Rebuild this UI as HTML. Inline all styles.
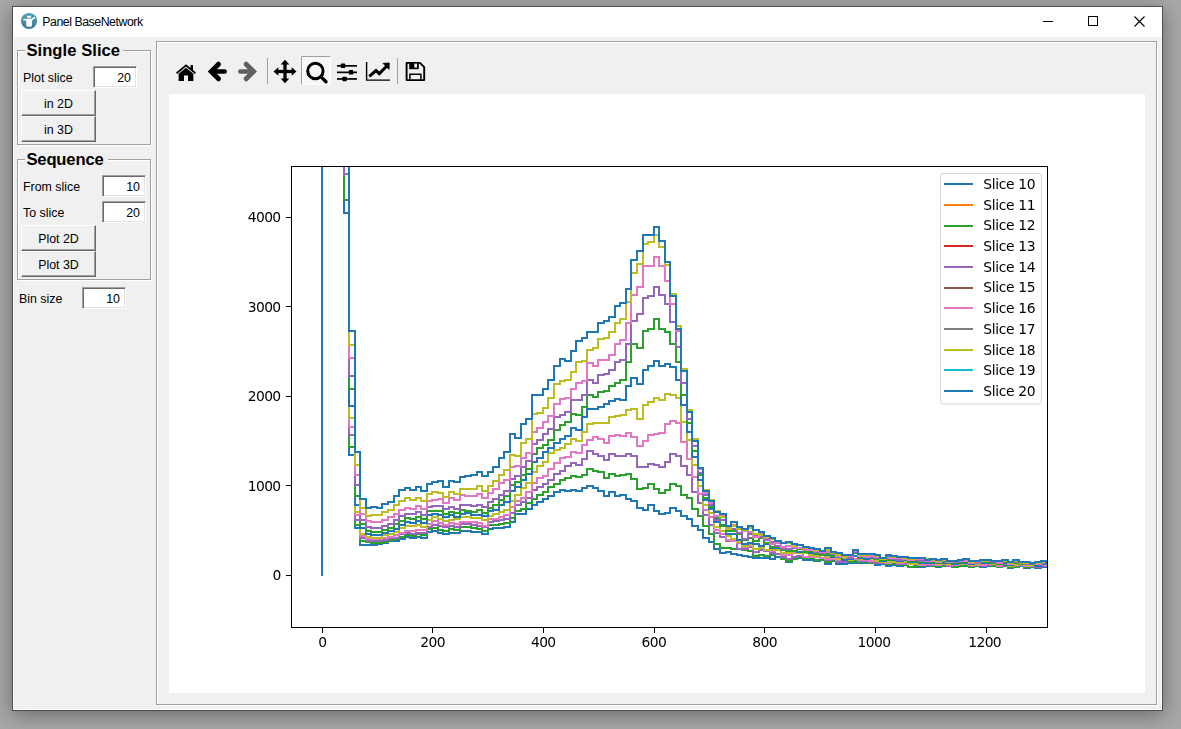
<!DOCTYPE html>
<html><head><meta charset="utf-8"><title>Panel BaseNetwork</title>
<style>
html,body{margin:0;padding:0;}
body{width:1181px;height:729px;overflow:hidden;background:#a8a8a8;font-family:"Liberation Sans",sans-serif;}
#root{position:relative;width:1181px;height:729px;overflow:hidden;background:#a8a8a8;}
.abs{position:absolute;}
#win{position:absolute;left:12px;top:6px;width:1149px;height:703px;border:1px solid #4e4e4e;background:#f0f0f0;
 box-shadow:0 4px 20px 0 rgba(0,0,0,.38);}
#titlebar{position:absolute;left:13px;top:7px;width:1149px;height:30px;background:#fff;}
#title{position:absolute;left:42.3px;top:14px;font-size:12.3px;line-height:16px;color:#000;letter-spacing:-0.45px;white-space:nowrap;}
#client{position:absolute;left:13px;top:37px;width:1147px;height:672px;background:#f0f0f0;border-left:1px solid #fff;border-right:1px solid #fff;border-bottom:1px solid #fff;}
.etch{position:absolute;box-sizing:border-box;border:1px solid #a0a0a0;box-shadow:1px 1px 0 #fff, inset 1px 1px 0 #fff;}
.gtitle{position:absolute;box-sizing:border-box;font-weight:bold;font-size:16.6px;line-height:20px;height:20px;background:#f0f0f0;color:#000;white-space:nowrap;padding-left:1.4px;letter-spacing:0.05px;overflow:hidden;}
.lbl{position:absolute;font-size:12.4px;line-height:14px;color:#000;white-space:nowrap;}
.inp{position:absolute;box-sizing:border-box;background:#fff;border:1px solid;border-color:#a0a0a0 #fff #fff #a0a0a0;box-shadow:inset 1px 1px 0 #696969, inset -1px -1px 0 #e3e3e3;font-size:12.4px;line-height:14px;text-align:right;color:#000;}
.inp span{position:absolute;right:5px;top:4px;}
.btn{position:absolute;box-sizing:border-box;background:#f0f0f0;border:1px solid;border-color:#fff #696969 #696969 #fff;box-shadow:inset -1px -1px 0 #a0a0a0, inset 1px 1px 0 #f0f0f0;font-size:12.4px;line-height:14px;text-align:center;color:#000;}
.btn span{position:absolute;left:0;right:0;top:6px;}
#canvas{position:absolute;left:169px;top:94px;width:976px;height:599px;background:#fff;}
svg text{font-family:"DejaVu Sans","Liberation Sans",sans-serif;}
</style></head><body>
<div id="root">
<div id="win"></div>
<div id="titlebar"></div>
<!-- app icon -->
<svg class="abs" style="left:20px;top:12px" width="18" height="18" viewBox="20 12 18 18">
 <defs><linearGradient id="ig" x1="0" y1="0" x2="0" y2="1"><stop offset="0" stop-color="#4ea3b8"/><stop offset="1" stop-color="#3b7898"/></linearGradient></defs>
 <circle cx="29.05" cy="20.95" r="8.05" fill="url(#ig)"/>
 <path d="M26.8 15.4 L28.3 16.1 L29 15.8 L29.7 16.1 L31.2 15.4 C31.4 17 30.4 18.1 29 18.1 C27.6 18.1 26.6 17 26.8 15.4 Z" fill="#fff"/>
 <path d="M23.3 18.7 L31.2 18.7 L34.5 16.8 L35.2 18.2 L32 20.5 L32 25.5 C32 26.4 30.5 26.8 29.1 26.8 C27.7 26.8 26.2 26.4 26.2 25.5 L26.2 20.4 L23.3 20.4 Z" fill="#fbfbfb"/>
</svg>
<div id="title">Panel BaseNetwork</div>
<!-- window controls -->
<svg class="abs" style="left:1030px;top:7px" width="132" height="30" viewBox="1030 7 132 30" shape-rendering="crispEdges" fill="none" stroke="#000" stroke-width="1">
 <path d="M1043 21.5H1053"/>
 <rect x="1088.5" y="16.5" width="9" height="9"/>
 <path d="M1134.5 16.5L1144.5 26.5M1144.5 16.5L1134.5 26.5" shape-rendering="geometricPrecision" stroke-width="1.1"/>
</svg>
<div id="client"></div>

<!-- Single Slice group -->
<div class="etch" style="left:17px;top:50px;width:134px;height:95px;"></div>
<div class="gtitle" id="gt1" style="left:25px;top:41px;width:98px;">Single Slice</div>
<div class="lbl" style="left:23px;top:71px;">Plot slice</div>
<div class="inp" style="left:93px;top:66px;width:44px;height:22px;"><span>20</span></div>
<div class="btn" style="left:21px;top:90px;width:75px;height:26px;"><span>in 2D</span></div>
<div class="btn" style="left:21px;top:116px;width:75px;height:26px;"><span>in 3D</span></div>

<!-- Sequence group -->
<div class="etch" style="left:17px;top:159px;width:134px;height:121px;"></div>
<div class="gtitle" id="gt2" style="left:25px;top:150px;width:83px;letter-spacing:-0.15px;">Sequence</div>
<div class="lbl" style="left:23px;top:180px;">From slice</div>
<div class="inp" style="left:102px;top:175px;width:44px;height:22px;"><span>10</span></div>
<div class="lbl" style="left:23px;top:206px;">To slice</div>
<div class="inp" style="left:102px;top:201px;width:44px;height:22px;"><span>20</span></div>
<div class="btn" style="left:21px;top:225px;width:75px;height:26px;"><span>Plot 2D</span></div>
<div class="btn" style="left:21px;top:251px;width:75px;height:26px;"><span>Plot 3D</span></div>

<div class="lbl" style="left:19px;top:292px;">Bin size</div>
<div class="inp" style="left:82px;top:287px;width:44px;height:22px;"><span>10</span></div>

<!-- main panel -->
<div class="etch" style="left:156px;top:41px;width:1001px;height:664px;"></div>

<!-- toolbar -->
<svg class="abs" style="left:169px;top:52px" width="270" height="38" viewBox="169 52 270 38">
 <defs><pattern id="chk" x="301" y="56" width="2" height="2" patternUnits="userSpaceOnUse"><rect width="2" height="2" fill="#f0f0f0"/><rect width="1" height="1" fill="#fff"/><rect x="1" y="1" width="1" height="1" fill="#fff"/></pattern></defs>
 <!-- home -->
 <g fill="#000">
  <path d="M186 64.2 L176 72.6 L177.1 73.9 L186 66.5 L194.9 73.9 L196 72.6 L193 70.1 L193 65 L190.6 65 L190.6 68.1 Z"/>
  <path d="M186 67.7 L178.6 73.8 L178.6 80.9 L184 80.9 L184 75.5 L188 75.5 L188 80.9 L193.4 80.9 L193.4 73.8 Z"/>
 </g>
 <!-- back -->
 <g fill="none" stroke="#000" stroke-width="4.2" stroke-linecap="round" stroke-linejoin="miter">
  <path d="M212 71.5H224.7" stroke-width="4.4"/><path d="M218.5 64.2L211.2 71.5L218.5 78.8" stroke-width="4.9"/>
 </g>
 <!-- forward -->
 <g fill="none" stroke="#606060" stroke-width="4.2" stroke-linecap="round" stroke-linejoin="miter">
  <path d="M240.2 71.5H252.9" stroke-width="4.4"/><path d="M246.2 64.2L253.5 71.5L246.2 78.8" stroke-width="4.9"/>
 </g>
 <rect x="267" y="58" width="1" height="26" fill="#a0a0a0"/>
 <!-- move -->
 <g fill="#000">
  <rect x="283.35" y="64" width="3.3" height="15"/><rect x="277.5" y="69.85" width="15" height="3.3"/>
  <path d="M285 59.8 L289.3 64.6 L280.7 64.6 Z M285 83.2 L289.3 78.4 L280.7 78.4 Z M273.5 71.5 L278.3 67.2 L278.3 75.8 Z M296.5 71.5 L291.7 67.2 L291.7 75.8 Z"/>
 </g>
 <!-- zoom (checked) -->
 <rect x="301" y="56" width="30" height="29" fill="url(#chk)"/>
 <path d="M301.5 85V56.5H331" fill="none" stroke="#a0a0a0" stroke-width="1"/>
 <path d="M301.5 84.5H330.5V56.5" fill="none" stroke="#fff" stroke-width="1"/>
 <circle cx="315.4" cy="71" r="7.7" fill="none" stroke="#000" stroke-width="3"/>
 <path d="M320.9 76.6 L326 81.7" stroke="#000" stroke-width="3.4" stroke-linecap="round"/>
 <!-- sliders -->
 <g fill="#000">
  <rect x="337" y="65" width="20" height="1.7"/><rect x="337" y="71.5" width="20" height="1.7"/><rect x="337" y="78.1" width="20" height="1.7"/>
  <rect x="340.8" y="63.6" width="4.4" height="4.5" rx=".6"/><rect x="348.8" y="70.1" width="4.4" height="4.5" rx=".6"/><rect x="342.4" y="76.7" width="4.4" height="4.5" rx=".6"/>
 </g>
 <!-- chart -->
 <path d="M366.6 62 V80.1 H390" fill="none" stroke="#000" stroke-width="1.4"/>
 <path d="M369.3 76.4 L376 70.6 L379.3 73.6 L386.6 66.2" fill="none" stroke="#000" stroke-width="3"/>
 <path d="M383 63.3 L389.3 63 L389 69.4 Z" fill="#000" stroke="#000" stroke-width=".8" stroke-linejoin="round"/>
 <rect x="397" y="58" width="1" height="26" fill="#a0a0a0"/>
 <!-- save -->
 <path d="M406.6 62.9 H420 L424.2 67.1 V80.1 H406.6 Z" fill="none" stroke="#000" stroke-width="1.9" stroke-linejoin="round"/>
 <path d="M409.2 63 H418.8 V69.2 H409.2 Z" fill="#000"/>
 <rect x="414.3" y="63.6" width="2.7" height="4" fill="#f0f0f0"/>
 <path d="M409.9 79.6 V74.2 H420.9 V79.6" fill="none" stroke="#000" stroke-width="1.5"/>
</svg>

<div id="canvas"></div>
<svg class="abs" style="left:169px;top:94px;will-change:transform" width="976" height="599" viewBox="169 94 976 599">
 <defs><clipPath id="ax"><rect x="291.5" y="166.5" width="756" height="461"/></clipPath></defs>
 <g clip-path="url(#ax)" fill="none" stroke-width="2" stroke-linejoin="miter" stroke-linecap="butt">
<path d="M322 575.7V100H327H333H338H344V213H349V455H355V528H360V545H366H371H377V544H382V543H388V541H394H399V539H405V537H410V538H416V537H421V538H427V532H432V531H438V533H443V534H449V533H454H460V531H465H471V532H477H482V534H488V529H493V528H499H504V527H510V522H515V514H521H526V509H532V505H537V502H543V499H548V496H554V492H560V490H565V491H571V490H576V491H582V488H587V486H593V488H598V491H604V496H609V492H615V496H620V495H626V499H631V501H637V508H643V510H648V505H654V511H659V514H665V513H670V508H676V511H681V516H687V519H692V526H698V530H703V538H709V542H714V549H720V553H726V552H731V554H737V555H742V556H748V557H753V558H759H764H770V559H775V557H781V559H786V562H792V559H797V558H803V560H809H814V561H820V560H825V564H831V561H836V564H842H847V563H853H858H864H869H875V565H880V564H886V566H891V565H897V566H903V565H908V567H914H919H925V566H930H936V567H941V566H947H952V567H958V566H963H969V567H974V566H980V567H986V566H991H997V567H1002V566H1008V568H1013V567H1019V566H1024V568H1030V567H1035V568H1041V567H1046V566H1052" stroke="#1f77b4"/>
<path d="M322 575.7V100H327H333H338H344V200H349V447H355V525H360V541H366V542H371V543H377H382V542H388V540H394V539H399V537H405V535H410V536H416V534H421V535H427V529H432V528H438V530H443V531H449V529H454V530H460V527H465H471V528H477V529H482V531H488V525H493H499V524H504V523H510V518H515V511H521V509H526V503H532V499H537V495H543V492H548V487H554V484H560V480H565V478H571V476H576V477H582V475H587V469H593V471H598V472H604V478H609V474H615V476H620V475H626V474H631V479H637V489H643V488H648V484H654V489H659V493H665V490H670V484H676V486H681V495H687V498H692V509H698V516H703V526H709V534H714V544H720V548H726H731V549H737H742V550H748V551H753V556H759V555H764V556H770V555H775V554H781V559H786V561H792V559H797V557H803V558H809H814V560H820H825V562H831V560H836V562H842H847H853V561H858V562H864H869V563H875H880H886V564H891V563H897V565H903H908V567H914V566H919H925V565H930V566H936H941H947H952V567H958V566H963H969V567H974V566H980V565H986H991V566H997V567H1002V565H1008V567H1013H1019V565H1024V567H1030H1035H1041V566H1046H1052" stroke="#2ca02c"/>
<path d="M322 575.7V100H327H333H338H344V174H349V435H355V520H360V538H366V541H371H377H382V540H388V538H394H399V534H405V533H410V534H416V533H421H427V527H432V525H438V526H443V527H449V526H454V527H460V524H465H471V525H477V526H482V527H488V522H493V521H499V520H504V519H510V513H515V505H521V502H526V498H532V490H537V487H543V484H548V480H554V474H560V471H565V466H571V463H576V465H582V459H587V451H593V454H598V456H604V460H609V454H615V456H620H626V454H631V456H637V467H643H648V464H654V465H659V467H665V462H670V454H676V456H681V466H687V475H692V492H698V503H703V515H709V525H714V533H720V537H726V541H731V540H737V549H742H748V547H753V552H759V550H764V551H770V553H775V554H781V557H786V559H792V557H797V556H803V557H809V556H814V557H820V558H825V560H831V558H836V562H842H847V560H853V559H858V561H864H869V562H875V563H880H886H891V562H897V564H903H908H914H919V565H925H930H936H941V564H947V566H952V565H958V564H963H969V566H974V565H980V566H986V565H991V564H997V566H1002V564H1008V566H1013H1019V565H1024V566H1030H1035V567H1041V566H1046H1052" stroke="#9467bd"/>
<path d="M322 575.7V100H327H333H338H344H349V427H355V515H360V536H366V539H371H377H382V538H388V537H394V535H399V533H405V531H410H416V530H421H427V524H432V521H438V523H443V525H449V523H454V524H460V522H465H471H477V523H482V526H488V519H493H499V517H504V515H510V507H515V501H521V498H526V492H532V483H537V478H543V476H548V469H554V463H560V458H565V457H571V452H576V453H582V445H587V440H593V437H598V439H604V443H609V436H615V435H620V436H626V433H631V437H637V446H643V441H648V435H654V434H659V433H665V424H670V421H676V423H681V442H687V459H692V477H698V494H703V510H709V517H714V530H720V534H726V540H731V541H737V543H742V547H748V546H753V549H759V547H764V550H770V551H775V550H781V555H786H792V553H797H803V557H809H814H820V558H825V559H831H836V560H842H847H853V559H858V560H864H869V561H875H880H886V563H891V561H897V563H903V562H908V563H914H919V565H925V564H930H936V565H941V564H947V565H952H958V564H963H969V565H974H980H986V564H991H997V566H1002V563H1008V566H1013V564H1019V565H1024V566H1030H1035H1041V565H1046H1052" stroke="#e377c2"/>
<path d="M322 575.7V100H327H333H338H344H349V418H355V512H360V534H366V537H371V538H377H382V535H388V534H394V532H399V528H405V526H410H416V525H421V527H427V520H432V517H438V519H443V521H449V520H454V519H460V517H465H471V518H477H482V520H488V516H493V514H499V512H504V510H510V501H515V495H521V488H526V483H532V472H537V466H543V462H548V453H554V450H560V448H565V444H571V439H576V441H582V432H587V424H593V423H598H604H609V417H615V416H620V415H626V410H631V409H637V419H643V405H648V402H654V398H659V400H665V394H670V395H676V398H681V422H687V440H692V465H698V486H703V505H709V513H714V527H720V531H726V536H731V539H737V542H742V546H748V544H753V549H759V548H764V550H770V549H775V550H781V553H786H792V551H797V553H803H809V555H814V556H820V555H825V557H831H836V559H842H847V560H853V556H858V559H864H869H875V561H880V562H886H891H897H903H908V564H914H919V562H925H930V563H936V564H941V563H947V564H952H958H963V563H969V565H974V564H980V563H986H991V564H997H1002V563H1008V566H1013V565H1019V564H1024V565H1030H1035V566H1041V564H1046V565H1052" stroke="#bcbd22"/>
<path d="M322 575.7V100H327H333H338H344H349V406H355V505H360V528H366V534H371V535H377H382V533H388V531H394V529H399V525H405V522H410V523H416V521H421V523H427V515H432V514H438V515H443V517H449V515H454V517H460V514H465V513H471V515H477H482V516H488V511H493V510H499V505H504V502H510V491H515V487H521V480H526V474H532V462H537V458H543V452H548V448H554V443H560V439H565V436H571V428H576V430H582V417H587V409H593H598V407H604V404H609V401H615V399H620V400H626V386H631V378H637V384H643V370H648V366H654V361H659V366H665V364H670V367H676V380H681V405H687V432H692V457H698V480H703V500H709V509H714V522H720V525H726V534H731H737V540H742V544H748V543H753V544H759V546H764V544H770V548H775H781V550H786H792V551H797V552H803H809V553H814V554H820V555H825H831V557H836H842V560H847V559H853V556H858V558H864V559H869V558H875V559H880V561H886V560H891H897V561H903V560H908V562H914H919V563H925H930H936H941H947H952V564H958V563H963H969V564H974V563H980H986H991H997V564H1002V563H1008V565H1013V563H1019V564H1024H1030H1035V566H1041V564H1046H1052" stroke="#1f77b4"/>
<path d="M322 575.7V100H327H333H338H344H349V389H355V496H360V524H366V531H371V532H377H382V530H388V528H394V524H399V521H405V518H410V519H416V517H421V519H427V511H432H438H443V514H449V512H454V513H460V510H465V511H471V512H477V510H482V513H488V508H493V505H499V500H504V496H510V485H515V482H521V475H526V469H532V454H537V448H543V445H548V440H554V430H560V425H565V422H571V414H576V415H582V407H587V395H593V397H598V392H604V391H609V386H615V383H620V380H626V362H631V344H637V348H643V331H648V329H654V319H659V329H665V332H670V344H676V362H681V395H687V423H692V451H698V475H703V498H709V507H714V518H720V526H726V531H731H737V534H742V540H748V538H753V541H759V538H764V543H770V547H775H781V550H786V551H792H797V549H803V552H809V551H814V554H820V555H825V554H831V556H836V557H842H847H853V553H858V557H864H869H875V559H880V560H886H891V559H897V560H903V559H908V561H914H919V562H925V561H930V562H936V563H941V562H947V563H952H958V562H963H969V563H974H980V562H986H991V563H997V564H1002V562H1008V564H1013V563H1019V564H1024H1030H1035H1041V563H1046V564H1052" stroke="#2ca02c"/>
<path d="M322 575.7V100H327H333H338H344H349V376H355V485H360V520H366V527H371V528H377H382V526H388V524H394V520H399V516H405V514H410H416V512H421V515H427V507H432V506H438H443V509H449V507H454V509H460V505H465H471V506H477V505H482V507H488V502H493V499H499V495H504V491H510V479H515V476H521V467H526V461H532V444H537V440H543V434H548V429H554V417H560V415H565V412H571V400H576H582V395H587V380H593V383H598V375H604V374H609V370H615V362H620V360H626V344H631V321H637V314H643V298H648V296H654V287H659V295H665V304H670V322H676V347H681V383H687V419H692V446H698V473H703V495H709V505H714V520H720H726V529H731H737V533H742V539H748V534H753V535H759V537H764V540H770V542H775V546H781V549H786H792V548H797H803V549H809V550H814V552H820V553H825V552H831V554H836V557H842H847V558H853V552H858V556H864V557H869H875V558H880V559H886V557H891V559H897V560H903V559H908V560H914H919V561H925H930H936V562H941V561H947H952V562H958V561H963H969V563H974H980V561H986H991V562H997V563H1002V561H1008V564H1013V562H1019V563H1024V564H1030V563H1035V564H1041V563H1046V564H1052" stroke="#9467bd"/>
<path d="M322 575.7V100H327H333H338H344H349V358H355V475H360V514H366V521H371V522H377H382V520H388V517H394V514H399V510H405V508H410V509H416V506H421V509H427V501H432V500H438V499H443V503H449V498H454V500H460V495H465V496H471H477V494H482V498H488V493H493V489H499V483H504V480H510V467H515V466H521V458H526V453H532V432H537V428H543V422H548V416H554V404H560V399H565V398H571V389H576V383H582V381H587V363H593V366H598V360H604H609V355H615V344H620V340H626V323H631V295H637V287H643V266H648H654V257H659V266H665V281H670V304H676V331H681V369H687V410H692V439H698V469H703V493H709V503H714V516H720H726V527H731V525H737V529H742V531H748V532H753V537H759V534H764V538H770V544H775V543H781V547H786V546H792V547H797V548H803V550H809H814V551H820V552H825H831H836V556H842V557H847V556H853V551H858V556H864V557H869V556H875V557H880V558H886H891H897H903V559H908V560H914V559H919H925V561H930H936V562H941V560H947V562H952V561H958H963H969V563H974V562H980V561H986H991H997V563H1002V561H1008V564H1013V561H1019V562H1024V563H1030H1035V564H1041V562H1046V563H1052" stroke="#e377c2"/>
<path d="M322 575.7V100H327H333H338H344H349V345H355V465H360V508H366V516H371V515H377H382V512H388V510H394V505H399V501H405V498H410V500H416V498H421V501H427V494H432V492H438V493H443V497H449V492H454V494H460V489H465H471H477V486H482V491H488V486H493V481H499V475H504V470H510V455H515V456H521V443H526V439H532V414H537V413H543V408H548V398H554V384H560V381H565V380H571V372H576V362H582V361H587V350H593V348H598V339H604V338H609V332H615V323H620V319H626V302H631V273H637V264H643V244H648V242H654V235H659V247H665V265H670V294H676V326H681V369H687V410H692V439H698V468H703V490H709V500H714V511H720V517H726V529H731V526H737V529H742V530H748V528H753V534H759V535H764V537H770V539H775V541H781V543H786H792V546H797V545H803V548H809H814V550H820V551H825V550H831V553H836V555H842V557H847V555H853V550H858V555H864H869V554H875V556H880V559H886V555H891V557H897H903V558H908V559H914V558H919H925V559H930V560H936V561H941V560H947V561H952H958V560H963V559H969V562H974V561H980H986V560H991V561H997H1002H1008V563H1013V561H1019V563H1024H1030H1035H1041V562H1046V563H1052" stroke="#bcbd22"/>
<path d="M322 575.7V100H327H333H338H344H349V331H355V452H360V499H366V508H371V507H377V508H382V504H388V502H394V496H399V490H405V488H410V490H416V487H421V491H427V484H432V482H438V481H443V487H449V481H454V482H460V477H465V476H471V475H477V472H482V476H488V472H493V467H499V458H504V452H510V434H515V438H521V424H526V419H532V395H537H543V389H548V380H554V366H560V359H565V361H571V351H576V341H582V338H587V332H593H598V323H604V321H609V317H615V306H620V303H626V289H631V260H637V251H643V235H648H654V227H659V241H665V262H670V296H676V329H681V371H687V412H692V441H698V468H703V491H709V501H714V512H720V514H726V526H731V522H737V527H742V529H748V526H753V530H759V532H764V536H770V538H775V541H781V543H786V542H792V544H797V545H803V547H809V548H814V549H820V551H825V548H831V552H836V553H842V555H847H853V550H858V554H864H869H875V555H880V558H886V555H891V556H897V557H903H908V558H914H919H925V560H930V559H936V560H941V559H947V561H952H958V560H963V559H969V561H974H980V560H986H991V561H997H1002V560H1008V562H1013V560H1019V562H1024H1030V563H1035V562H1041V561H1046V563H1052" stroke="#1f77b4"/>
 </g>
 <!-- spines -->
 <g shape-rendering="crispEdges" stroke="#000" stroke-width="1" fill="none">
  <rect x="291.5" y="166.5" width="756" height="461"/>
<path d="M322.5 627.5V633"/>
<path d="M432.5 627.5V633"/>
<path d="M543.5 627.5V633"/>
<path d="M654.5 627.5V633"/>
<path d="M764.5 627.5V633"/>
<path d="M875.5 627.5V633"/>
<path d="M986.5 627.5V633"/>
<path d="M286 575.5H291.5"/>
<path d="M286 485.5H291.5"/>
<path d="M286 396.5H291.5"/>
<path d="M286 306.5H291.5"/>
<path d="M286 217.5H291.5"/>
 </g>
 <g font-size="13.89" fill="#000" letter-spacing="-0.62">
<text x="322.25" y="646.5" text-anchor="middle">0</text>
<text x="432.61" y="646.5" text-anchor="middle">200</text>
<text x="543.27" y="646.5" text-anchor="middle">400</text>
<text x="653.93" y="646.5" text-anchor="middle">600</text>
<text x="764.59" y="646.5" text-anchor="middle">800</text>
<text x="874.00" y="646.5" text-anchor="middle">1000</text>
<text x="984.66" y="646.5" text-anchor="middle">1200</text>
<text x="280.6" y="579.5" text-anchor="end">0</text>
<text x="280.6" y="490.5" text-anchor="end">1000</text>
<text x="280.6" y="400.5" text-anchor="end">2000</text>
<text x="280.6" y="311.5" text-anchor="end">3000</text>
<text x="280.6" y="221.5" text-anchor="end">4000</text>
 </g>
 <!-- legend -->
 <rect x="940.5" y="173.5" width="101" height="230.5" rx="2.8" fill="#fff" fill-opacity=".8" stroke="#ccc" stroke-opacity=".8" stroke-width="1"/>
 <g stroke-width="2" fill="none">
<path d="M944 184 H973" stroke="#1f77b4"/>
<path d="M944 205 H973" stroke="#ff7f0e"/>
<path d="M944 226 H973" stroke="#2ca02c"/>
<path d="M944 246 H973" stroke="#d62728"/>
<path d="M944 267 H973" stroke="#9467bd"/>
<path d="M944 288 H973" stroke="#8c564b"/>
<path d="M944 308 H973" stroke="#e377c2"/>
<path d="M944 329 H973" stroke="#7f7f7f"/>
<path d="M944 350 H973" stroke="#bcbd22"/>
<path d="M944 370 H973" stroke="#17becf"/>
<path d="M944 391 H973" stroke="#1f77b4"/>
 </g>
 <g font-size="13.89" fill="#000" letter-spacing="-0.33">
<text x="983.2" y="188.9">Slice 10</text>
<text x="983.2" y="209.6">Slice 11</text>
<text x="983.2" y="230.3">Slice 12</text>
<text x="983.2" y="251.0">Slice 13</text>
<text x="983.2" y="271.7">Slice 14</text>
<text x="983.2" y="292.4">Slice 15</text>
<text x="983.2" y="313.2">Slice 16</text>
<text x="983.2" y="333.9">Slice 17</text>
<text x="983.2" y="354.6">Slice 18</text>
<text x="983.2" y="375.3">Slice 19</text>
<text x="983.2" y="396.0">Slice 20</text>
 </g>
</svg>
</div>
</body></html>
